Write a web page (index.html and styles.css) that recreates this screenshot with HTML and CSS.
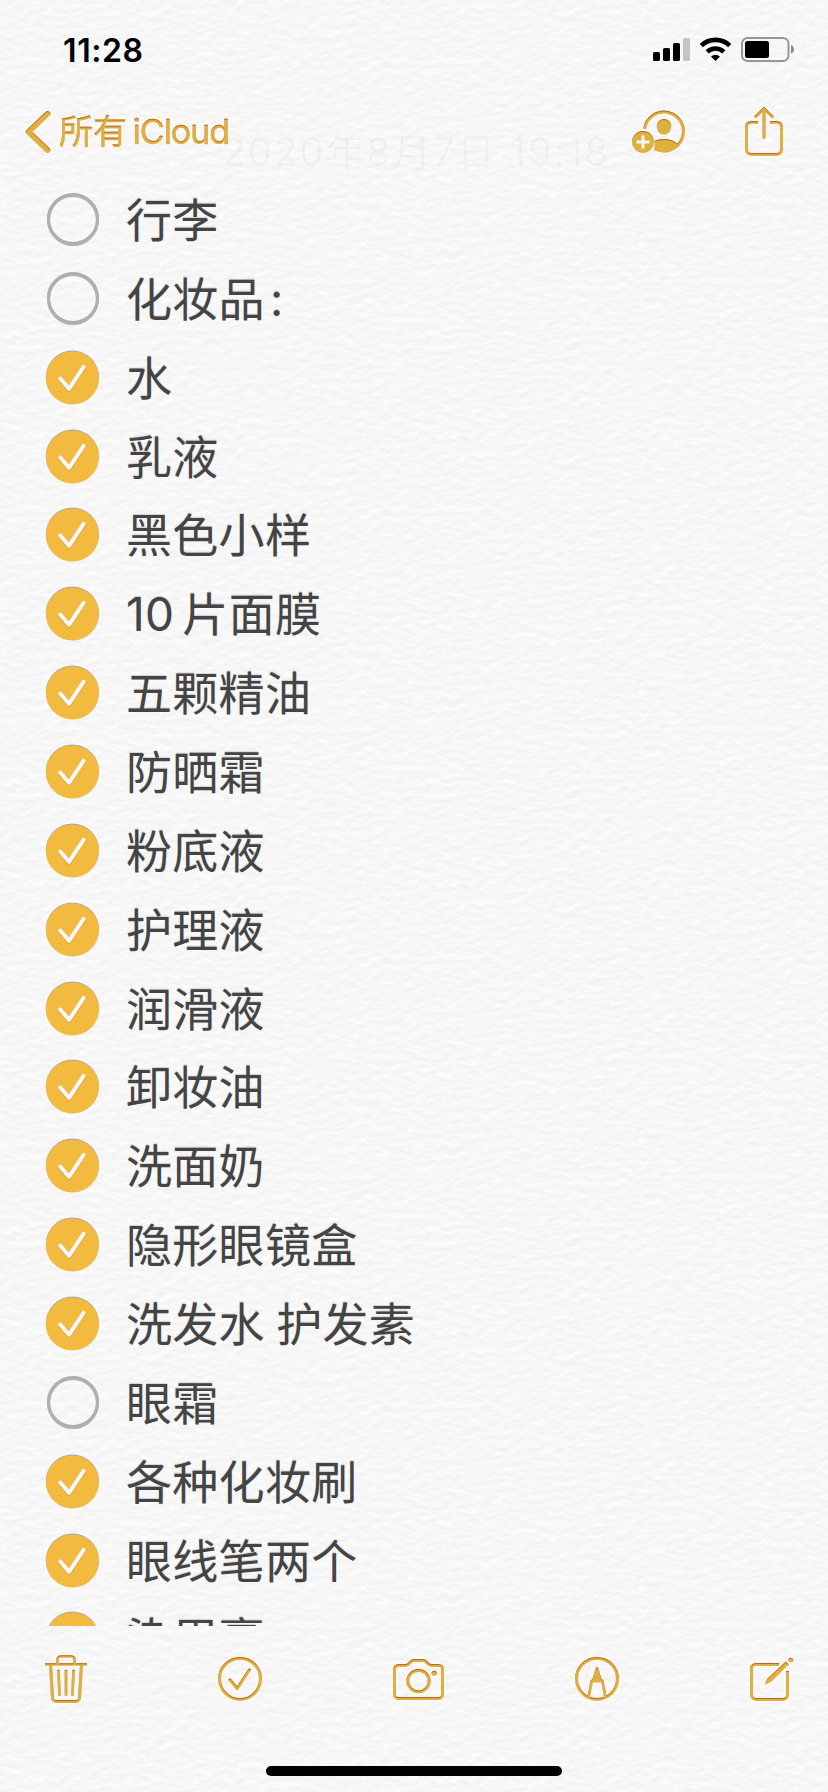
FILE: index.html
```html
<!DOCTYPE html>
<html lang="zh-CN">
<head>
    <meta charset="UTF-8">
    <meta name="viewport" content="width=device-width, initial-scale=1.0">
    <title>备忘录</title>
    <link rel="stylesheet" href="styles.css">
</head>
<body>
    <svg class="defs" width="0" height="0">
        <filter id="emboss" x="-10%" y="-10%" width="120%" height="120%" color-interpolation-filters="sRGB">
            <feOffset in="SourceAlpha" dy="1.2" result="down"/>
            <feComposite in="SourceAlpha" in2="down" operator="out" result="edge"/>
            <feFlood flood-color="#b4551f" flood-opacity="0.8"/>
            <feComposite in2="edge" operator="in" result="shade"/>
            <feDropShadow in="SourceGraphic" dx="0" dy="1" stdDeviation="0.5" flood-color="#fff" result="base"/>
            <feMerge><feMergeNode in="base"/><feMergeNode in="shade"/></feMerge>
        </filter>
        <symbol id="done" viewBox="0 0 54 54">
            <circle cx="27.400" cy="27" r="26.600" fill="#f2bb40"/>
            <path d="M15.200 28.500 24 38.800 38.600 16.800" fill="none" stroke="#d79a35" stroke-width="4" stroke-linecap="round" stroke-linejoin="round"/>
            <path d="M15.200 27.500 24 37.800 38.600 15.800" fill="none" stroke="#f8f8f8" stroke-width="4" stroke-linecap="round" stroke-linejoin="round"/>
        </symbol>
        <symbol id="todo" viewBox="0 0 54 54">
            <circle cx="28" cy="27" r="24.500" fill="none" stroke="#b0b0b0" stroke-width="3"/>
        </symbol>
    </svg>

    <div class="phone">
        <header class="top">
            <div class="status">
                <span class="time">11:28</span>
                <svg width="142" height="26" viewBox="653 37 142 26">
                    <rect x="653" y="52" width="7" height="9" rx="1.600"/>
                    <rect x="663" y="48" width="7" height="13" rx="1.600"/>
                    <rect x="673" y="43" width="7" height="18" rx="1.600"/>
                    <rect x="683" y="38" width="7" height="23" rx="1.600" fill="#c4c4c4"/>
                    <g fill="none" stroke="#000" stroke-width="4.600">
                        <path d="M701.300 45.600a20.500 20.500 0 0 1 28.400 0"/>
                        <path d="M707.200 51.800a12 12 0 0 1 16.600 0"/>
                    </g>
                    <path d="M711 56.600q4.500-3.800 9 0l-4.500 4.400z"/>
                    <rect x="742" y="38" width="46.500" height="23" rx="5.500" fill="none" stroke="#969696" stroke-width="2"/>
                    <rect x="745" y="41" width="24" height="17" rx="2.500"/>
                    <path d="M791 45q3 1 3 4.500t-3 4z" fill="#8c8c8c"/>
                </svg>
            </div>
            <nav class="nav">
                <a class="back">
                    <svg class="icon" width="26" height="44" viewBox="25 110 26 44">
                        <path d="M47.600 113.800 28.500 132 47.600 150.300" stroke-width="5.500" stroke-linecap="round"/>
                    </svg>
                    <span>所有 <span class="latin">iCloud</span></span>
                </a>
                <div class="actions">
                    <svg class="icon" width="56" height="48" viewBox="631 108 56 48">
                        <path d="M644.600 129a19.500 19.500 0 1 1 10.500 20"/>
                        <ellipse class="solid" cx="664" cy="126.800" rx="7.200" ry="7.900"/>
                        <path class="solid" d="M654.500 150q.6-5.500 0-8.800c5-3.200 17-3.600 23.500 3.100-4 5.200-14.500 9.700-23.500 5.700z"/>
                        <circle class="solid" cx="643" cy="142" r="10.900"/>
                        <path class="cut" d="M636.500 142h13M643 135.500v13"/>
                    </svg>
                    <svg class="icon" width="42" height="52" viewBox="743 105 42 52">
                        <path d="M758 121.500h-7a4.500 4.500 0 0 0-4.500 4.500v23a4.500 4.500 0 0 0 4.500 4.500h26a4.500 4.500 0 0 0 4.500-4.500v-23a4.500 4.500 0 0 0-4.500-4.500h-7"/>
                        <path d="M764 109v27.500M756 115.700l8-8 8 8" stroke-linecap="round"/>
                    </svg>
                </div>
            </nav>
            <p class="date">2020年8月7日 19:18</p>
        </header>

        <ul class="list">
            <li><svg class="check"><use href="#todo"/></svg>行李</li>
            <li><svg class="check"><use href="#todo"/></svg>化妆品<span class="colon">:</span></li>
            <li><svg class="check"><use href="#done"/></svg>水</li>
            <li><svg class="check"><use href="#done"/></svg>乳液</li>
            <li><svg class="check"><use href="#done"/></svg>黑色小样</li>
            <li><svg class="check"><use href="#done"/></svg><span class="num">10</span>片面膜</li>
            <li><svg class="check"><use href="#done"/></svg>五颗精油</li>
            <li><svg class="check"><use href="#done"/></svg>防晒霜</li>
            <li><svg class="check"><use href="#done"/></svg>粉底液</li>
            <li><svg class="check"><use href="#done"/></svg>护理液</li>
            <li><svg class="check"><use href="#done"/></svg>润滑液</li>
            <li><svg class="check"><use href="#done"/></svg>卸妆油</li>
            <li><svg class="check"><use href="#done"/></svg>洗面奶</li>
            <li><svg class="check"><use href="#done"/></svg>隐形眼镜盒</li>
            <li><svg class="check"><use href="#done"/></svg>洗发水 护发素</li>
            <li><svg class="check"><use href="#todo"/></svg>眼霜</li>
            <li><svg class="check"><use href="#done"/></svg>各种化妆刷</li>
            <li><svg class="check"><use href="#done"/></svg>眼线笔两个</li>
            <li><svg class="check"><use href="#done"/></svg>染眉膏</li>
        </ul>

        <footer class="toolbar">
            <svg class="icon" width="44" height="50" viewBox="44 1654 44 50">
                <path d="M45 1664.500h42M57.500 1664v-4a3.500 3.500 0 0 1 3.500-3.500h10a3.500 3.500 0 0 1 3.500 3.500v4" stroke-width="2.600"/>
                <path d="M50.500 1665l2 33a3.500 3.500 0 0 0 3.500 3.500h20a3.500 3.500 0 0 0 3.500-3.500l2-33"/>
                <path d="M58.500 1671l1 24M66 1671v24M73.500 1671l-1 24" stroke-width="2.600" stroke-linecap="round"/>
            </svg>
            <svg class="icon" width="46" height="46" viewBox="217 1656 46 46">
                <circle cx="240" cy="1679" r="20.500"/>
                <path d="M230 1680l7.200 8.700 12.200-18.700" stroke-linecap="round"/>
            </svg>
            <svg class="icon" width="53" height="46" viewBox="392 1656 53 46">
                <path d="M398.500 1665.500h7c5 0 4-5 8.500-5h9c4.500 0 3.500 5 8.500 5h7a4 4 0 0 1 4 4v25a4 4 0 0 1-4 4h-40a4 4 0 0 1-4-4v-25a4 4 0 0 1 4-4z"/>
                <circle cx="418.500" cy="1681.200" r="10.700"/>
                <circle class="solid" cx="434.200" cy="1673.300" r="2.600"/>
            </svg>
            <svg class="icon" width="46" height="46" viewBox="574 1656 46 46">
                <circle cx="597" cy="1679" r="20.500"/>
                <path d="M588.500 1698l3-16 1.500-2h8l1.500 2 3 16" stroke-width="2.600"/>
                <path class="solid" d="M597 1667q1 0 1.500 2l4 13.500h-11l4-13.500q.5-2 1.500-2z"/>
            </svg>
            <svg class="icon" width="46" height="46" viewBox="749 1656 46 46">
                <path d="M779 1664.500h-23a4.500 4.500 0 0 0-4.500 4.500v26a4.500 4.500 0 0 0 4.500 4.500h27a4.500 4.500 0 0 0 4.500-4.500v-24"/>
                <path class="solid" d="M765 1684.500l2.200-5.500 18.600-17.600 3 3-18 17.800z"/>
                <circle class="solid" cx="790.800" cy="1660.200" r="2.400"/>
            </svg>
        </footer>
        <div class="home-bar"></div>
    </div>
</body>
</html>
```
FILE: styles.css
```css
:root {
    --gold: #deb03e;
    --text: #444;
    --paper: #f7f7f7;
}

* {
    box-sizing: border-box;
    margin: 0;
    padding: 0;
}

body {
    font-family: Inter, 'Noto Sans CJK SC', sans-serif;
    /* paper grain */
    background: var(--paper) url("data:image/svg+xml,%3Csvg xmlns='http://www.w3.org/2000/svg' width='414' height='448'%3E%3Cfilter id='p' x='0' y='0' width='100%25' height='100%25' color-interpolation-filters='sRGB'%3E%3CfeTurbulence type='fractalNoise' baseFrequency='.09 .15' numOctaves='3' seed='4' stitchTiles='stitch'/%3E%3CfeDiffuseLighting surfaceScale='.15' diffuseConstant='1.145' lighting-color='%23f9f9f9'%3E%3CfeDistantLight azimuth='260' elevation='60'/%3E%3C/feDiffuseLighting%3E%3C/filter%3E%3Crect width='414' height='448' filter='url(%23p)'/%3E%3C/svg%3E");
    color: var(--text);
}

.defs {
    position: absolute;
}

.phone {
    width: 828px;
    height: 1792px;
    display: flex;
    flex-direction: column;
    overflow: hidden;
}

.top {
    position: relative;
    height: 180px;
    flex: none;
}

.status {
    display: flex;
    justify-content: space-between;
    align-items: center;
    height: 100px;
    padding: 0 33px 0 63px;
}

.time {
    color: #000;
    font-size: 32px;
    font-weight: 600;
    letter-spacing: 0.6px;
}

.nav {
    display: flex;
    justify-content: space-between;
    align-items: center;
    height: 64px;
    padding: 0 43px 0 25px;
}

.back {
    display: flex;
    align-items: center;
    gap: 8px;
    color: var(--gold);
    font-size: 34px;
    line-height: 44px;
    white-space: nowrap;
    -webkit-text-stroke: 0.3px var(--gold);
    filter: url(#emboss);
}

.back .icon {
    filter: none;
}

.latin {
    margin-left: -4px;
    letter-spacing: -1px;
}

.actions {
    display: flex;
    align-items: center;
    gap: 56px;
}

.icon {
    fill: none;
    stroke: var(--gold);
    stroke-width: 3;
    stroke-linejoin: round;
    filter: url(#emboss);
}

.icon .solid {
    fill: var(--gold);
    stroke: none;
}

.icon .cut {
    stroke: var(--paper);
}

/* note date showing faintly through the bar */
.date {
    position: absolute;
    left: 222px;
    top: 124px;
    font-size: 39px;
    line-height: 56px;
    letter-spacing: 1.7px;
    white-space: nowrap;
    color: rgba(0, 0, 0, 0.03);
}

.list {
    flex: 1;
    min-height: 0;
    overflow: hidden;
    list-style: none;
    padding-left: 45px;
}

.list li {
    display: flex;
    align-items: center;
    height: 78.87px;
    font-size: 46px;
    line-height: 76px;
    padding-top: 1px;
    letter-spacing: 0.3px;
    word-spacing: -2px;
    white-space: pre;
    text-shadow: 0 -1px 1px rgba(0, 0, 0, 0.15);
}

.check {
    width: 54px;
    height: 54px;
    margin-right: 27px;
    flex: none;
    filter: drop-shadow(0 -1px 0.6px rgba(90, 70, 60, 0.45));
}

.num {
    margin-right: 8px;
}

.colon {
    margin-left: 5px;
}

.toolbar {
    flex: none;
    display: flex;
    justify-content: space-between;
    align-items: center;
    height: 106px;
    padding: 0 33px 0 44px;
}

.home-bar {
    flex: none;
    width: 296px;
    height: 10px;
    margin: 34px auto 16px;
    border-radius: 5px;
    background: #000;
}
```
